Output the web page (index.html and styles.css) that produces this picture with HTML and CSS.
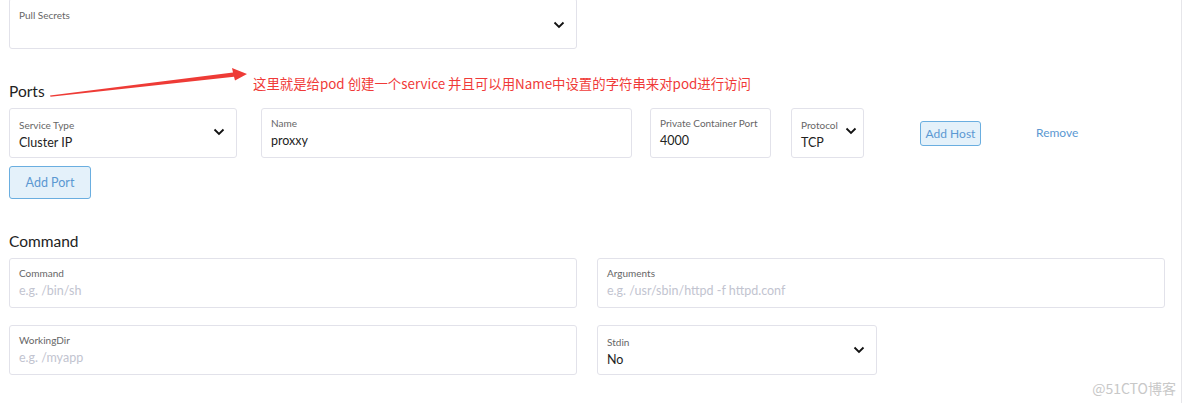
FILE: index.html
```html
<!DOCTYPE html>
<html>
<head>
<meta charset="utf-8">
<link rel="stylesheet" href="styles.css">
</head>
<body>
<div class="page">
  <div class="field select pull">
    <div class="label">Pull Secrets</div>
    <svg class="chev" viewBox="0 0 12 8"><path d="M1.5 1.5 L6 6 L10.5 1.5" /></svg>
  </div>

  <h2 class="heading ports-h">Ports</h2>

  <div class="port-row">
    <div class="field select w-type">
      <div class="label">Service Type</div>
      <div class="value">Cluster IP</div>
      <svg class="chev" viewBox="0 0 12 8"><path d="M1.5 1.5 L6 6 L10.5 1.5" /></svg>
    </div>
    <div class="field w-name">
      <div class="label">Name</div>
      <div class="value">proxxy</div>
    </div>
    <div class="field w-port">
      <div class="label">Private Container Port</div>
      <div class="value">4000</div>
    </div>
    <div class="field select w-proto">
      <div class="label">Protocol</div>
      <div class="value">TCP</div>
      <svg class="chev" viewBox="0 0 12 8"><path d="M1.5 1.5 L6 6 L10.5 1.5" /></svg>
    </div>
    <button class="btn btn-host">Add Host</button>
    <a class="remove">Remove</a>
  </div>

  <button class="btn btn-port">Add Port</button>

  <h2 class="heading cmd-h">Command</h2>

  <div class="grid-row">
    <div class="field wide">
      <div class="label">Command</div>
      <div class="value ph">e.g. /bin/sh</div>
    </div>
    <div class="field wide">
      <div class="label">Arguments</div>
      <div class="value ph">e.g. /usr/sbin/httpd -f httpd.conf</div>
    </div>
  </div>
  <div class="grid-row row2">
    <div class="field wide">
      <div class="label">WorkingDir</div>
      <div class="value ph">e.g. /myapp</div>
    </div>
    <div class="field select w-stdin">
      <div class="label">Stdin</div>
      <div class="value">No</div>
      <svg class="chev" viewBox="0 0 12 8"><path d="M1.5 1.5 L6 6 L10.5 1.5" /></svg>
    </div>
  </div>

  <svg class="arrow" width="260" height="40" viewBox="0 0 260 40">
    <polygon points="50,37.4 233,14.6 232,10 247,16 235,22.5 234,18.8 50.5,38.8" fill="#ee3b36"/>
  </svg>
  <div class="note">这里就是给pod 创建一个service 并且可以用Name中设置的字符串来对pod进行访问</div>
  <div class="watermark">@51CTO博客</div>
</div>
</body>
</html>
```

FILE: styles.css
```css
* { box-sizing: border-box; }
html, body { margin: 0; padding: 0; background: #fff; }
body { font-family: Lato, "Noto Sans", sans-serif; color: #222; overflow: hidden; }

.page {
  position: relative;
  width: 1182px;
  height: 405px;
  padding-left: 9px;
  border-right: 1px solid #e6e6ea;
}

.field {
  position: relative;
  border: 1px solid #e2e2ea;
  border-radius: 3px;
  height: 50px;
  padding: 7px 9px 0 9px;
  background: #fff;
}
.field.select { padding-top: 9px; }

.label {
  font-size: 10px;
  line-height: 14px;
  color: #666;
}
.value {
  margin-top: 2px;
  font-size: 12.5px;
  line-height: 18px;
  color: #222;
}
.value.ph { color: #c2c4d0; }

.chev {
  position: absolute;
  right: 11px;
  top: 50%;
  width: 12px;
  height: 8px;
  margin-top: -4px;
}
.chev path { fill: none; stroke: #111; stroke-width: 1.8; }

.pull {
  width: 568px;
  height: 51px;
  margin-top: -2px;
  padding-top: 10px;
}
.pull .chev { margin-top: -3px; }

.heading {
  margin: 0;
  font-weight: 400;
  font-size: 15.5px;
  line-height: 20px;
  color: #222;
}
.ports-h { margin-top: 32px; }
.cmd-h { margin-top: 32px; }

.port-row {
  display: flex;
  align-items: flex-start;
  margin-top: 7px;
}
.w-type { width: 228px; }
.w-name { width: 371px; margin-left: 24px; }
.w-port { width: 121px; margin-left: 18px; }
.w-proto { width: 73px; margin-left: 20px; padding-top: 9px; }
.w-proto .chev { right: 6px; margin-top: -6px; }
.w-type .chev { margin-top: -5px; }

.btn {
  font-family: Lato, "Noto Sans", sans-serif;
  background: #e4f1fa;
  border: 1px solid #6aaee0;
  border-radius: 3px;
  color: #5b98d2;
  cursor: pointer;
  padding: 0;
}
.btn-host {
  width: 61px;
  height: 25px;
  margin-left: 56px;
  margin-top: 13px;
  font-size: 12px;
}
.remove {
  margin-left: 55px;
  margin-top: 17px;
  font-size: 12px;
  line-height: 16px;
  color: #5b98d2;
}
.btn-port {
  display: block;
  width: 82px;
  height: 33px;
  margin-top: 8px;
  font-size: 12.5px;
}

.grid-row {
  display: flex;
  gap: 20px;
  margin-top: 7px;
}
.grid-row.row2 { margin-top: 17px; }
.wide { width: 568px; }
.w-stdin { width: 280px; }

.arrow {
  position: absolute;
  left: 0;
  top: 60px;
}
.note {
  position: absolute;
  left: 253px;
  top: 75px;
  font-family: "Microsoft YaHei", "Noto Sans CJK SC", sans-serif;
  font-size: 13.4px;
  line-height: 20px;
  color: #f03a38;
  white-space: nowrap;
}
.watermark {
  position: absolute;
  right: 5px;
  top: 380px;
  font-family: "Noto Sans CJK SC", sans-serif;
  font-size: 14px;
  line-height: 20px;
  color: #c8c8c8;
}
```
